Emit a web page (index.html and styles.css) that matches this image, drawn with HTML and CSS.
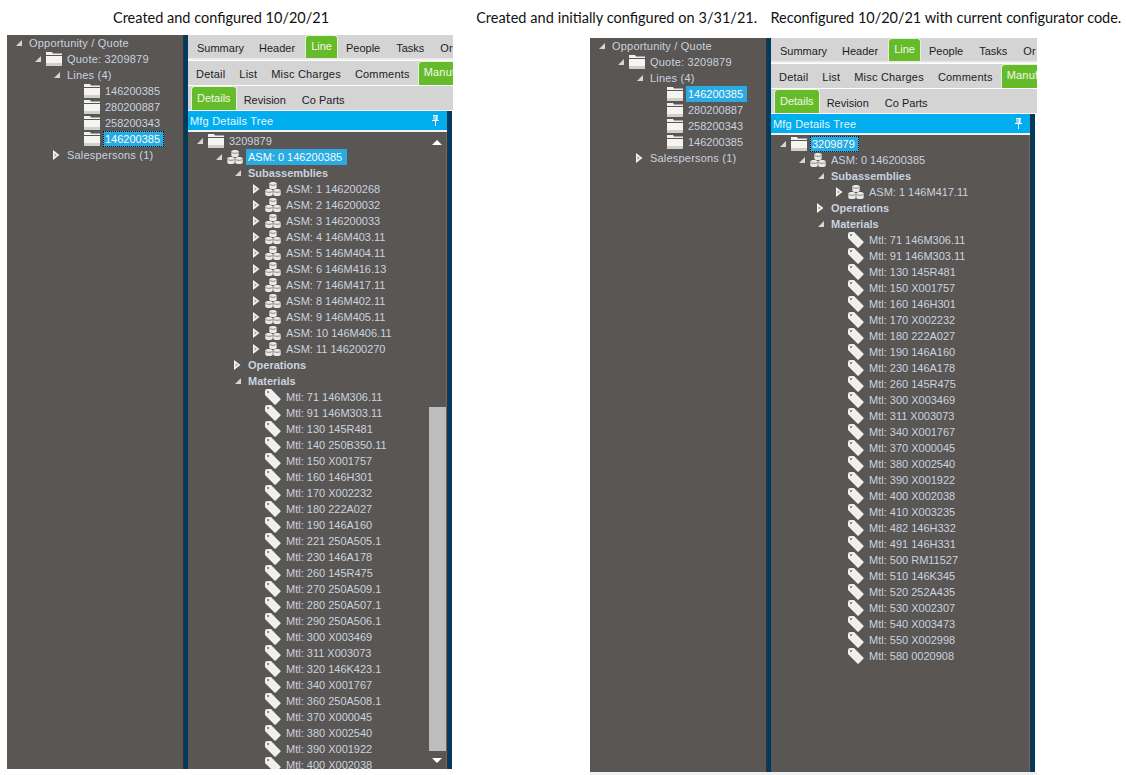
FILE: index.html
```html
<!DOCTYPE html>
<html lang="en">
<head>
<meta charset="utf-8">
<title>Configurator comparison</title>
<link rel="stylesheet" href="styles.css">
</head>
<body>
<svg class="defs" width="0" height="0" aria-hidden="true">
  <symbol id="open" viewBox="0 0 8 10"><polygon points="7,2 7,8 1,8" fill="#d6d6d4"/></symbol>
  <symbol id="closed" viewBox="0 0 8 10"><polygon points="0,0 6.500,5 0,10" fill="#f4f4f2"/><polygon points="1.500,3 4,5 1.500,7" fill="#a9a8a6"/></symbol>
  <symbol id="folder" viewBox="0 0 16 16"><path d="M0 1h6l1 1.500h9V4H0z" fill="#f0f0ee"/><rect y="5" width="16" height="7" fill="#f4f4f2"/><rect y="12" width="16" height="3" fill="#cfcfcc"/></symbol>
  <symbol id="cyl" viewBox="0 0 8 8"><path d="M0.300 2C0.300 0 7.700 0 7.700 2V6C7.700 8 0.300 8 0.300 6z" fill="#e9e9e7"/><path d="M0.500 2.800C1.500 4.200 6.500 4.200 7.500 2.800" fill="none" stroke="#85837f" stroke-width=".9"/></symbol>
  <symbol id="asm" viewBox="0 0 16 16">
    <use href="#cyl" x="4" y="0.500" width="8" height="8"/>
    <use href="#cyl" x="0" y="7.500" width="8" height="8"/>
    <use href="#cyl" x="8" y="7.500" width="8" height="8"/>
  </symbol>
  <symbol id="tag" viewBox="0 0 16 16"><path d="M0 2.200Q0 0 2.200 0H6L15.400 9.400Q16 10 15.400 10.800L10.800 15.400Q10 16 9.400 15.400L0 6z" fill="#efefed"/><circle cx="3" cy="3" r="1" fill="#6d6b68"/></symbol>
  <symbol id="pin" viewBox="0 0 9 11"><path d="M2 0h5v1H6.500v4H8v1H5v5H4V6H1V5h1.500V1H2zM3.500 1v4h1V1z" fill="#fff"/></symbol>
</svg>

<div class="captions">
  <p class="caption caption-a">Created and configured 10/20/21</p>
  <p class="caption caption-b">Created and initially configured on 3/31/21.&nbsp; <span class="sentence">Reconfigured 10/20/21 with current configurator code.</span></p>
</div>

<div class="windows">
  <section class="window window-a">
    <nav class="side">
      <div class="row l0"><svg class="exp"><use href="#open"/></svg><span class="lab spaced">Opportunity / Quote</span></div>
      <div class="row l1"><svg class="exp"><use href="#open"/></svg><svg class="ico"><use href="#folder"/></svg><span class="lab spaced">Quote: 3209879</span></div>
      <div class="row l2"><svg class="exp"><use href="#open"/></svg><span class="lab spaced">Lines (4)</span></div>
      <div class="row leaf"><svg class="ico"><use href="#folder"/></svg><span class="lab">146200385</span></div>
      <div class="row leaf"><svg class="ico"><use href="#folder"/></svg><span class="lab">280200887</span></div>
      <div class="row leaf"><svg class="ico"><use href="#folder"/></svg><span class="lab">258200343</span></div>
      <div class="row leaf"><svg class="ico"><use href="#folder"/></svg><span class="lab sel dotted">146200385</span></div>
      <div class="row l2"><svg class="exp"><use href="#closed"/></svg><span class="lab spaced">Salespersons (1)</span></div>
    </nav>
    <div class="divider"></div>
    <main class="main">
      <div class="tabs t1"><span class="tab">Summary</span><span class="tab">Header</span><span class="tab on">Line</span><span class="tab">People</span><span class="tab">Tasks</span><span class="tab">Or</span></div>
      <div class="tabs t2"><span class="tab">Detail</span><span class="tab">List</span><span class="tab">Misc Charges</span><span class="tab">Comments</span><span class="tab on">Manuf</span></div>
      <div class="tabs t3"><span class="tab on">Details</span><span class="tab">Revision</span><span class="tab">Co Parts</span></div>
      <div class="body">
        <div class="pane">
          <header class="head"><span>Mfg Details Tree</span><svg class="pin"><use href="#pin"/></svg></header>
          <div class="tree">
            <div class="row l0"><svg class="exp"><use href="#open"/></svg><svg class="ico"><use href="#folder"/></svg><span class="lab">3209879</span></div>
            <div class="row l1"><svg class="exp"><use href="#open"/></svg><svg class="ico"><use href="#asm"/></svg><span class="lab sel wide">ASM: 0 146200385</span></div>
            <div class="row l2"><svg class="exp"><use href="#open"/></svg><span class="lab bold">Subassemblies</span></div>
            <div class="row l3"><svg class="exp"><use href="#closed"/></svg><svg class="ico"><use href="#asm"/></svg><span class="lab">ASM: 1 146200268</span></div>
            <div class="row l3"><svg class="exp"><use href="#closed"/></svg><svg class="ico"><use href="#asm"/></svg><span class="lab">ASM: 2 146200032</span></div>
            <div class="row l3"><svg class="exp"><use href="#closed"/></svg><svg class="ico"><use href="#asm"/></svg><span class="lab">ASM: 3 146200033</span></div>
            <div class="row l3"><svg class="exp"><use href="#closed"/></svg><svg class="ico"><use href="#asm"/></svg><span class="lab">ASM: 4 146M403.11</span></div>
            <div class="row l3"><svg class="exp"><use href="#closed"/></svg><svg class="ico"><use href="#asm"/></svg><span class="lab">ASM: 5 146M404.11</span></div>
            <div class="row l3"><svg class="exp"><use href="#closed"/></svg><svg class="ico"><use href="#asm"/></svg><span class="lab">ASM: 6 146M416.13</span></div>
            <div class="row l3"><svg class="exp"><use href="#closed"/></svg><svg class="ico"><use href="#asm"/></svg><span class="lab">ASM: 7 146M417.11</span></div>
            <div class="row l3"><svg class="exp"><use href="#closed"/></svg><svg class="ico"><use href="#asm"/></svg><span class="lab">ASM: 8 146M402.11</span></div>
            <div class="row l3"><svg class="exp"><use href="#closed"/></svg><svg class="ico"><use href="#asm"/></svg><span class="lab">ASM: 9 146M405.11</span></div>
            <div class="row l3"><svg class="exp"><use href="#closed"/></svg><svg class="ico"><use href="#asm"/></svg><span class="lab">ASM: 10 146M406.11</span></div>
            <div class="row l3"><svg class="exp"><use href="#closed"/></svg><svg class="ico"><use href="#asm"/></svg><span class="lab">ASM: 11 146200270</span></div>
            <div class="row l2"><svg class="exp"><use href="#closed"/></svg><span class="lab bold">Operations</span></div>
            <div class="row l2"><svg class="exp"><use href="#open"/></svg><span class="lab bold">Materials</span></div>
            <div class="row leaf"><svg class="ico"><use href="#tag"/></svg><span class="lab">Mtl: 71 146M306.11</span></div>
            <div class="row leaf"><svg class="ico"><use href="#tag"/></svg><span class="lab">Mtl: 91 146M303.11</span></div>
            <div class="row leaf"><svg class="ico"><use href="#tag"/></svg><span class="lab">Mtl: 130 145R481</span></div>
            <div class="row leaf"><svg class="ico"><use href="#tag"/></svg><span class="lab">Mtl: 140 250B350.11</span></div>
            <div class="row leaf"><svg class="ico"><use href="#tag"/></svg><span class="lab">Mtl: 150 X001757</span></div>
            <div class="row leaf"><svg class="ico"><use href="#tag"/></svg><span class="lab">Mtl: 160 146H301</span></div>
            <div class="row leaf"><svg class="ico"><use href="#tag"/></svg><span class="lab">Mtl: 170 X002232</span></div>
            <div class="row leaf"><svg class="ico"><use href="#tag"/></svg><span class="lab">Mtl: 180 222A027</span></div>
            <div class="row leaf"><svg class="ico"><use href="#tag"/></svg><span class="lab">Mtl: 190 146A160</span></div>
            <div class="row leaf"><svg class="ico"><use href="#tag"/></svg><span class="lab">Mtl: 221 250A505.1</span></div>
            <div class="row leaf"><svg class="ico"><use href="#tag"/></svg><span class="lab">Mtl: 230 146A178</span></div>
            <div class="row leaf"><svg class="ico"><use href="#tag"/></svg><span class="lab">Mtl: 260 145R475</span></div>
            <div class="row leaf"><svg class="ico"><use href="#tag"/></svg><span class="lab">Mtl: 270 250A509.1</span></div>
            <div class="row leaf"><svg class="ico"><use href="#tag"/></svg><span class="lab">Mtl: 280 250A507.1</span></div>
            <div class="row leaf"><svg class="ico"><use href="#tag"/></svg><span class="lab">Mtl: 290 250A506.1</span></div>
            <div class="row leaf"><svg class="ico"><use href="#tag"/></svg><span class="lab">Mtl: 300 X003469</span></div>
            <div class="row leaf"><svg class="ico"><use href="#tag"/></svg><span class="lab">Mtl: 311 X003073</span></div>
            <div class="row leaf"><svg class="ico"><use href="#tag"/></svg><span class="lab">Mtl: 320 146K423.1</span></div>
            <div class="row leaf"><svg class="ico"><use href="#tag"/></svg><span class="lab">Mtl: 340 X001767</span></div>
            <div class="row leaf"><svg class="ico"><use href="#tag"/></svg><span class="lab">Mtl: 360 250A508.1</span></div>
            <div class="row leaf"><svg class="ico"><use href="#tag"/></svg><span class="lab">Mtl: 370 X000045</span></div>
            <div class="row leaf"><svg class="ico"><use href="#tag"/></svg><span class="lab">Mtl: 380 X002540</span></div>
            <div class="row leaf"><svg class="ico"><use href="#tag"/></svg><span class="lab">Mtl: 390 X001922</span></div>
            <div class="row leaf"><svg class="ico"><use href="#tag"/></svg><span class="lab">Mtl: 400 X002038</span></div>
            <span class="arrow up"></span>
            <span class="thumb"></span>
            <span class="arrow down"></span>
          </div>
        </div>
        <div class="strip"></div>
      </div>
    </main>
  </section>

  <section class="window window-b">
    <nav class="side">
      <div class="row l0"><svg class="exp"><use href="#open"/></svg><span class="lab spaced">Opportunity / Quote</span></div>
      <div class="row l1"><svg class="exp"><use href="#open"/></svg><svg class="ico"><use href="#folder"/></svg><span class="lab spaced">Quote: 3209879</span></div>
      <div class="row l2"><svg class="exp"><use href="#open"/></svg><span class="lab spaced">Lines (4)</span></div>
      <div class="row leaf"><svg class="ico"><use href="#folder"/></svg><span class="lab sel">146200385</span></div>
      <div class="row leaf"><svg class="ico"><use href="#folder"/></svg><span class="lab">280200887</span></div>
      <div class="row leaf"><svg class="ico"><use href="#folder"/></svg><span class="lab">258200343</span></div>
      <div class="row leaf"><svg class="ico"><use href="#folder"/></svg><span class="lab">146200385</span></div>
      <div class="row l2"><svg class="exp"><use href="#closed"/></svg><span class="lab spaced">Salespersons (1)</span></div>
    </nav>
    <div class="divider"></div>
    <main class="main">
      <div class="tabs t1"><span class="tab">Summary</span><span class="tab">Header</span><span class="tab on">Line</span><span class="tab">People</span><span class="tab">Tasks</span><span class="tab">Or</span></div>
      <div class="tabs t2"><span class="tab">Detail</span><span class="tab">List</span><span class="tab">Misc Charges</span><span class="tab">Comments</span><span class="tab on">Manuf</span></div>
      <div class="tabs t3"><span class="tab on">Details</span><span class="tab">Revision</span><span class="tab">Co Parts</span></div>
      <div class="body">
        <div class="pane">
          <header class="head"><span>Mfg Details Tree</span><svg class="pin"><use href="#pin"/></svg></header>
          <div class="tree">
            <div class="row l0"><svg class="exp"><use href="#open"/></svg><svg class="ico"><use href="#folder"/></svg><span class="lab sel dotted">3209879</span></div>
            <div class="row l1"><svg class="exp"><use href="#open"/></svg><svg class="ico"><use href="#asm"/></svg><span class="lab">ASM: 0 146200385</span></div>
            <div class="row l2"><svg class="exp"><use href="#open"/></svg><span class="lab bold">Subassemblies</span></div>
            <div class="row l3"><svg class="exp"><use href="#closed"/></svg><svg class="ico"><use href="#asm"/></svg><span class="lab">ASM: 1 146M417.11</span></div>
            <div class="row l2"><svg class="exp"><use href="#closed"/></svg><span class="lab bold">Operations</span></div>
            <div class="row l2"><svg class="exp"><use href="#open"/></svg><span class="lab bold">Materials</span></div>
            <div class="row leaf"><svg class="ico"><use href="#tag"/></svg><span class="lab">Mtl: 71 146M306.11</span></div>
            <div class="row leaf"><svg class="ico"><use href="#tag"/></svg><span class="lab">Mtl: 91 146M303.11</span></div>
            <div class="row leaf"><svg class="ico"><use href="#tag"/></svg><span class="lab">Mtl: 130 145R481</span></div>
            <div class="row leaf"><svg class="ico"><use href="#tag"/></svg><span class="lab">Mtl: 150 X001757</span></div>
            <div class="row leaf"><svg class="ico"><use href="#tag"/></svg><span class="lab">Mtl: 160 146H301</span></div>
            <div class="row leaf"><svg class="ico"><use href="#tag"/></svg><span class="lab">Mtl: 170 X002232</span></div>
            <div class="row leaf"><svg class="ico"><use href="#tag"/></svg><span class="lab">Mtl: 180 222A027</span></div>
            <div class="row leaf"><svg class="ico"><use href="#tag"/></svg><span class="lab">Mtl: 190 146A160</span></div>
            <div class="row leaf"><svg class="ico"><use href="#tag"/></svg><span class="lab">Mtl: 230 146A178</span></div>
            <div class="row leaf"><svg class="ico"><use href="#tag"/></svg><span class="lab">Mtl: 260 145R475</span></div>
            <div class="row leaf"><svg class="ico"><use href="#tag"/></svg><span class="lab">Mtl: 300 X003469</span></div>
            <div class="row leaf"><svg class="ico"><use href="#tag"/></svg><span class="lab">Mtl: 311 X003073</span></div>
            <div class="row leaf"><svg class="ico"><use href="#tag"/></svg><span class="lab">Mtl: 340 X001767</span></div>
            <div class="row leaf"><svg class="ico"><use href="#tag"/></svg><span class="lab">Mtl: 370 X000045</span></div>
            <div class="row leaf"><svg class="ico"><use href="#tag"/></svg><span class="lab">Mtl: 380 X002540</span></div>
            <div class="row leaf"><svg class="ico"><use href="#tag"/></svg><span class="lab">Mtl: 390 X001922</span></div>
            <div class="row leaf"><svg class="ico"><use href="#tag"/></svg><span class="lab">Mtl: 400 X002038</span></div>
            <div class="row leaf"><svg class="ico"><use href="#tag"/></svg><span class="lab">Mtl: 410 X003235</span></div>
            <div class="row leaf"><svg class="ico"><use href="#tag"/></svg><span class="lab">Mtl: 482 146H332</span></div>
            <div class="row leaf"><svg class="ico"><use href="#tag"/></svg><span class="lab">Mtl: 491 146H331</span></div>
            <div class="row leaf"><svg class="ico"><use href="#tag"/></svg><span class="lab">Mtl: 500 RM11527</span></div>
            <div class="row leaf"><svg class="ico"><use href="#tag"/></svg><span class="lab">Mtl: 510 146K345</span></div>
            <div class="row leaf"><svg class="ico"><use href="#tag"/></svg><span class="lab">Mtl: 520 252A435</span></div>
            <div class="row leaf"><svg class="ico"><use href="#tag"/></svg><span class="lab">Mtl: 530 X002307</span></div>
            <div class="row leaf"><svg class="ico"><use href="#tag"/></svg><span class="lab">Mtl: 540 X003473</span></div>
            <div class="row leaf"><svg class="ico"><use href="#tag"/></svg><span class="lab">Mtl: 550 X002998</span></div>
            <div class="row leaf"><svg class="ico"><use href="#tag"/></svg><span class="lab">Mtl: 580 0020908</span></div>
          </div>
        </div>
        <div class="strip"></div>
      </div>
    </main>
  </section>
</div>
</body>
</html>
```
FILE: styles.css
```css
* { box-sizing: border-box; }
html, body { margin: 0; height: 775px; overflow: hidden; background: #fff; }
body { font-family: "Liberation Sans", Arial, sans-serif; font-size: 11px; }
.defs { position: absolute; }

.captions { display: flex; height: 35px; padding: 9px 0 0 113px; }
.caption { margin: 0; font-family: Lato, "Open Sans", sans-serif; font-size: 14.5px; line-height: 18px; color: #111; white-space: nowrap; }
.caption-b { margin-left: 147px; word-spacing: .2px; }
.sentence { margin-left: 5.5px; letter-spacing: -.05px; }

.windows { display: flex; padding-left: 7px; }
.window { display: flex; width: 446px; height: 734px; overflow: hidden; }
.window-b { width: 447px; height: 737px; margin: 3px 0 0 137px; border-bottom: 3px solid #f0f0f0; }

.side { width: 176px; background: #595654; flex: none; }
.divider { width: 5px; flex: none; background: #003a5c; border-left: 1px solid #2f3337; }
.main { flex: 1; min-width: 0; display: flex; flex-direction: column; }

.tabs { display: flex; flex: none; overflow: hidden; background: #d4d4d4; color: #1c1c1c; padding-left: 1px; align-items: flex-end; }
.t1 { height: 24px; border-bottom: 1px solid #e8e8e8; box-shadow: 0 1px 0 #f0f0f0; margin-bottom: 2px; }
.t2 { height: 24px; margin-bottom: 1px; letter-spacing: .2px; }
.t3 { height: 24px; margin-bottom: 1px; padding-left: 3px; }
.tab { flex: none; padding: 0 8px; height: 22px; line-height: 24px; white-space: nowrap; }
.t1 .tab:first-child { padding-right: 7px; }
.t1 .tab:nth-child(2) { padding-right: 10px; }
.t2 .tab { padding: 0 7px; line-height: 22px; }
.t3 .tab:nth-child(2) { padding-left: 7px; }
.tab.on, .t2 .tab.on { align-self: stretch; height: auto; background: #66bb2a; color: #f2f8ea; border: 1px solid #e4f1da; border-bottom: 0; border-radius: 4px 4px 0 0; padding: 0 5px; line-height: 20px; }
.t3 .tab.on { line-height: 22px; }
.t2 .tab.on { margin-left: 1px; padding-right: 30px; }

.body { flex: 1; min-height: 0; display: flex; padding-right: 1px; }
.window-b .body { padding-right: 2px; }
.pane { width: 259px; flex: none; display: flex; flex-direction: column; background: #595654; }
.strip { width: 5px; flex: none; background: #003a5c; border-left: 1px solid #2f3337; }

.head { height: 21px; flex: none; display: flex; align-items: center; justify-content: space-between; padding: 0 7px 0 2px; background: #00aeef; border-bottom: 2px solid #f2f2f2; color: #eaf6ff; letter-spacing: .2px; }
.pin { width: 9px; height: 11px; }

.tree { position: relative; flex: 1; min-height: 0; overflow: hidden; padding-top: 1px; border-right: 1px solid #6a6866; }

.row { display: flex; align-items: center; height: 16px; color: #c9d3df; white-space: nowrap; }
.l0 { padding-left: 8px; }
.l1 { padding-left: 27px; }
.l2 { padding-left: 46px; }
.l3 { padding-left: 65px; }
.leaf { padding-left: 74px; }

.exp { width: 8px; height: 10px; flex: none; margin-right: 1px; }
.ico { width: 16px; height: 16px; flex: none; margin-left: 3px; }
.lab { margin-left: 3px; padding: 0 2px; line-height: 16px; }
.spaced { letter-spacing: .2px; }
.bold { font-weight: 700; }
.sel { background: #29abe2; color: #f4fbff; padding-right: 4px; }
.wide { padding-right: 5px; }
.dotted { outline: 1px dotted #111; outline-offset: -1px; }

.thumb { position: absolute; left: 241px; top: 275px; width: 17px; height: 344px; background: #bdbdbd; }
.arrow { position: absolute; left: 244px; width: 0; height: 0; border-left: 5px solid transparent; border-right: 5px solid transparent; }
.arrow.up { top: 8px; border-bottom: 5px solid #fff; }
.arrow.down { top: 626px; border-top: 5px solid #fff; }
```
